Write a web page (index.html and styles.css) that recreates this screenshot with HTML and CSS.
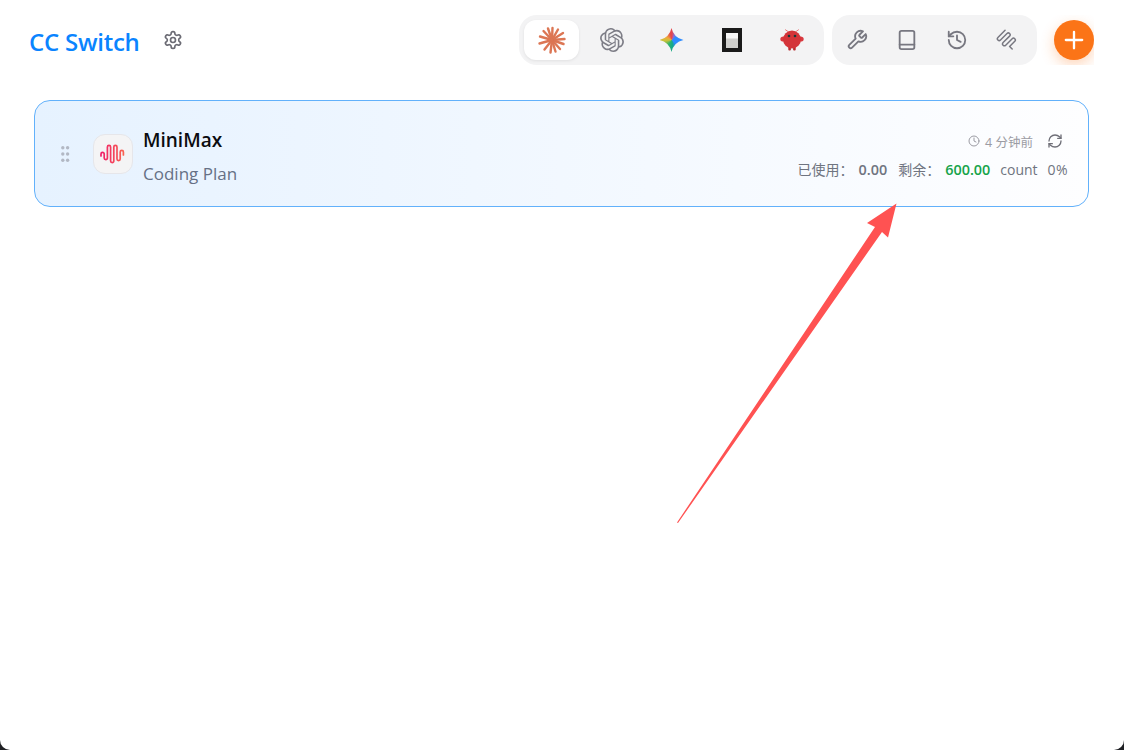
FILE: index.html
```html
<!DOCTYPE html>
<html lang="zh">
<head>
<meta charset="utf-8">
<title>CC Switch</title>
<link rel="stylesheet" href="styles.css">
</head>
<body>
<div class="window">
  <header class="header">
    <div class="brand">
      <h1 class="title">CC Switch</h1>
      <button class="gear">
        <svg class="icon-20" viewBox="0 0 24 24"><path d="M12.22 2h-.44a2 2 0 0 0-2 2v.18a2 2 0 0 1-1 1.73l-.43.25a2 2 0 0 1-2 0l-.15-.08a2 2 0 0 0-2.73.73l-.22.38a2 2 0 0 0 .73 2.73l.15.1a2 2 0 0 1 1 1.72v.51a2 2 0 0 1-1 1.74l-.15.09a2 2 0 0 0-.73 2.73l.22.38a2 2 0 0 0 2.73.73l.15-.08a2 2 0 0 1 2 0l.43.25a2 2 0 0 1 1 1.73V20a2 2 0 0 0 2 2h.44a2 2 0 0 0 2-2v-.18a2 2 0 0 1 1-1.73l.43-.25a2 2 0 0 1 2 0l.15.08a2 2 0 0 0 2.73-.73l.22-.39a2 2 0 0 0-.73-2.73l-.15-.08a2 2 0 0 1-1-1.74v-.5a2 2 0 0 1 1-1.74l.15-.09a2 2 0 0 0 .73-2.73l-.22-.38a2 2 0 0 0-2.73-.73l-.15.08a2 2 0 0 1-2 0l-.43-.25a2 2 0 0 1-1-1.73V4a2 2 0 0 0-2-2z"/><circle cx="12" cy="12" r="3"/></svg>
      </button>
    </div>
    <div class="toolbar">
      <nav class="group apps">
        <button class="app active">
          <svg class="logo-28" viewBox="0 0 28 28"><g class="rays"><path d="M14 14 14.500 2"/><path d="M14 14 20 3.500"/><path d="M14 14 25 7"/><path d="M14 14 26.500 13"/><path d="M14 14 25.500 18"/><path d="M14 14 22 23"/><path d="M14 14 17.500 25.500"/><path d="M14 14 12.500 26.500"/><path d="M14 14 6.500 23.500"/><path d="M14 14 1.500 17.500"/><path d="M14 14 2 10.500"/><path d="M14 14 5.500 5"/><path d="M14 14 10 2.500"/></g></svg>
        </button>
        <button class="app">
          <svg class="logo-24" viewBox="0 0 24 24"><path class="openai" d="M22.2819 9.8211a5.9847 5.9847 0 0 0-.5157-4.9108 6.0462 6.0462 0 0 0-6.5098-2.9A6.0651 6.0651 0 0 0 4.9807 4.1818a5.9847 5.9847 0 0 0-3.9977 2.9 6.0462 6.0462 0 0 0 .7427 7.0966 5.98 5.98 0 0 0 .511 4.9107 6.051 6.051 0 0 0 6.5146 2.9001A5.9847 5.9847 0 0 0 13.2599 24a6.0557 6.0557 0 0 0 5.7718-4.2058 5.9894 5.9894 0 0 0 3.9977-2.9001 6.0557 6.0557 0 0 0-.7475-7.0729zm-9.022 12.6081a4.4755 4.4755 0 0 1-2.8764-1.0408l.1419-.0804 4.7783-2.7582a.7948.7948 0 0 0 .3927-.6813v-6.7369l2.02 1.1686a.071.071 0 0 1 .038.052v5.5826a4.504 4.504 0 0 1-4.4945 4.4944zm-9.6607-4.1254a4.4708 4.4708 0 0 1-.5346-3.0137l.142.0852 4.783 2.7582a.7712.7712 0 0 0 .7806 0l5.8428-3.3685v2.3324a.0804.0804 0 0 1-.0332.0615L9.74 19.9502a4.4992 4.4992 0 0 1-6.1408-1.6464zM2.3408 7.8956a4.485 4.485 0 0 1 2.3655-1.9728V11.6a.7664.7664 0 0 0 .3879.6765l5.8144 3.3543-2.0201 1.1685a.0757.0757 0 0 1-.071 0l-4.8303-2.7865A4.504 4.504 0 0 1 2.3408 7.872zm16.5963 3.8558L13.1038 8.364 15.1192 7.2a.0757.0757 0 0 1 .071 0l4.8303 2.7913a4.4944 4.4944 0 0 1-.6765 8.1042v-5.6772a.79.79 0 0 0-.407-.667zm2.0107-3.0231l-.142-.0852-4.7735-2.7818a.7759.7759 0 0 0-.7854 0L9.409 9.2297V6.8974a.0662.0662 0 0 1 .0284-.0615l4.8303-2.7866a4.4992 4.4992 0 0 1 6.6802 4.66zM8.3065 12.863l-2.02-1.1638a.0804.0804 0 0 1-.038-.0567V6.0742a4.4992 4.4992 0 0 1 7.3757-3.4537l-.142.0805L8.704 5.459a.7948.7948 0 0 0-.3927.6813zm1.0976-2.3654l2.602-1.4998 2.6069 1.4998v2.9994l-2.5974 1.4997-2.6067-1.4997Z"/></svg>
        </button>
        <button class="app"><span class="gemini"></span></button>
        <button class="app">
          <svg class="logo-24" viewBox="0 0 24 24"><rect x="2" y="0" width="20" height="24.500" fill="#1a1a1a"/><rect x="6" y="5" width="12" height="15" fill="#cfcfcd"/><rect x="6" y="5" width="12" height="5.500" fill="#f7f7f7"/></svg>
        </button>
        <button class="app">
          <svg class="logo-24" viewBox="0 0 24 24"><path d="M8 3.500 5.500 1.800M16 3.500 18.500 1.800" stroke="#e9777c" stroke-width="1" fill="none"/><ellipse cx="3.500" cy="11" rx="3.200" ry="2.600" fill="#d9393f"/><ellipse cx="20.500" cy="11" rx="3.200" ry="2.600" fill="#d9393f"/><rect x="8.300" y="18" width="2.600" height="4.500" rx="1" fill="#b92c30"/><rect x="13.100" y="18" width="2.600" height="4.500" rx="1" fill="#b92c30"/><ellipse cx="12" cy="11.500" rx="9" ry="9" fill="#d43439"/><circle cx="9" cy="8" r="1.300" fill="#173a3a"/><circle cx="15" cy="8" r="1.300" fill="#173a3a"/></svg>
        </button>
      </nav>
      <nav class="group tools">
        <button class="tool"><svg class="icon-22" viewBox="0 0 24 24"><path d="M14.7 6.3a1 1 0 0 0 0 1.4l1.6 1.6a1 1 0 0 0 1.4 0l3.77-3.77a6 6 0 0 1-7.94 7.94l-6.91 6.91a2.120 2.120 0 0 1-3-3l6.910-6.910a6 6 0 0 1 7.940-7.940l-3.760 3.760z"/></svg></button>
        <button class="tool"><svg class="icon-22" viewBox="0 0 24 24"><rect x="4" y="2" width="16" height="20" rx="2"/><path d="M4 17H20"/></svg></button>
        <button class="tool"><svg class="icon-22" viewBox="0 0 24 24"><path d="M3 12a9 9 0 1 0 9-9 9.750 9.750 0 0 0-6.740 2.740L3 8"/><path d="M3 3v5h5"/><path d="M12 7v5l4 2"/></svg></button>
        <button class="tool"><svg class="icon-22 icon-thin" viewBox="0 0 24 24"><g transform="rotate(-45 12 12)"><path d="M18 3H7a2 2 0 0 0 0 4H17a2 2 0 0 1 0 4H7a2 2 0 0 0 0 4H17a2 2 0 0 1 0 4H9V23"/></g></svg></button>
      </nav>
      <div class="add-wrap">
        <button class="add"><svg class="icon-add" viewBox="0 0 24 24"><path d="M5 12H19M12 5V19"/></svg></button>
      </div>
    </div>
  </header>

  <main class="main">
    <article class="card">
      <svg class="grip" viewBox="0 0 10 16"><circle cx="1.800" cy="1.800" r="1.700"/><circle cx="6.600" cy="1.800" r="1.700"/><circle cx="1.800" cy="8" r="1.700"/><circle cx="6.600" cy="8" r="1.700"/><circle cx="1.800" cy="14.200" r="1.700"/><circle cx="6.600" cy="14.200" r="1.700"/></svg>
      <div class="tile">
        <svg class="wave" viewBox="0 0 26 20">
          <defs><linearGradient id="waveGrad" gradientUnits="userSpaceOnUse" x1="0" x2="26" y1="0" y2="0"><stop offset="0" stop-color="#ee1b6a"/><stop offset="1" stop-color="#fa6a50"/></linearGradient></defs>
          <path d="M1 12V10a1.600 1.600 0 0 1 3.200 0V14a1.600 1.600 0 0 0 3.200 0V3a1.600 1.600 0 0 1 3.200 0V17a1.600 1.600 0 0 0 3.200 0V3a1.600 1.600 0 0 1 3.200 0V15a1.600 1.600 0 0 0 3.200 0V8a1.600 1.600 0 0 1 3.200 0V11"/>
        </svg>
      </div>
      <div class="info">
        <div class="name">MiniMax</div>
        <div class="plan">Coding Plan</div>
      </div>
      <div class="usage">
        <div class="usage-top">
          <span class="updated"><svg class="icon-12" viewBox="0 0 24 24"><circle cx="12" cy="12" r="10"/><path d="M12 6v6l4 2"/></svg>4 分钟前</span>
          <svg class="icon-16" viewBox="0 0 24 24"><path d="M3 12a9 9 0 0 1 9-9 9.750 9.750 0 0 1 6.740 2.740L21 8"/><path d="M21 3v5h-5"/><path d="M21 12a9 9 0 0 1-9 9 9.750 9.750 0 0 1-6.740-2.740L3 16"/><path d="M8 16H3v5"/></svg>
        </div>
        <div class="usage-stats">
          <span>已使用：</span><b class="used">0.00</b>
          <span class="remain">剩余：</span><b class="left">600.00</b>
          <span class="unit">count</span><span class="pct">0%</span>
        </div>
      </div>
    </article>
  </main>

  <svg class="arrow" viewBox="0 0 1124 750"><polygon points="677,522.500 875,227 867,223 896.500,203.500 888,237.500 882,232 678,523"/></svg>
</div>
</body>
</html>
```

FILE: styles.css
```css
* { box-sizing: border-box; }
html, body { margin: 0; height: 750px; overflow: hidden; background: #1f2024; }
body { font-family: "Open Sans", "Noto Sans CJK SC", sans-serif; }
button { border: 0; padding: 0; background: none; display: flex; align-items: center; justify-content: center; }

.window { position: relative; height: 750px; background: #fff; border-radius: 0 0 10px 10px; }

.header { display: flex; justify-content: space-between; padding: 15px 30px 0 29px; height: 65px; }
.brand { display: flex; align-items: center; height: 50px; }
.title { margin: 4px 0 0; font-size: 24px; line-height: 32px; font-weight: 600; color: #0a84ff; letter-spacing: -.24px; }
.gear { width: 20px; height: 20px; margin-left: 23px; }

svg { fill: none; stroke: #71717a; stroke-width: 2; stroke-linecap: round; stroke-linejoin: round; display: block; }
.icon-20 { width: 20px; height: 20px; stroke: #6b6b74; }
.icon-22 { width: 22px; height: 22px; stroke: #777780; }
.icon-thin { stroke-width: 1.600; }
.icon-12 { width: 12px; height: 12px; stroke: #9b9ba3; margin-right: 5px; }
.icon-16 { width: 16px; height: 16px; stroke: #6f6f78; margin-left: 14px; }
.icon-add { width: 28px; height: 28px; stroke: #fff; }

.toolbar { display: flex; align-items: flex-start; }
.group { display: flex; height: 50px; padding: 5px; background: #f3f3f4; border-radius: 18px; }
.apps { gap: 5px; margin-right: 8px; }
.tools { gap: 10px; padding-right: 10px; }
.app { width: 55px; height: 40px; border-radius: 12px; }
.app.active { background: #fff; box-shadow: 0 1px 3px rgba(0,0,0,.08); }
.tool { width: 40px; height: 40px; }

.logo-28 { width: 28px; height: 28px; }
.logo-24 { width: 24px; height: 24px; stroke: none; }
.rays path { stroke: #dc7654; stroke-width: 2.400; stroke-linecap: round; }
.openai { fill: #7d7d86; stroke: none; }
.gemini { width: 24px; height: 24px; background: conic-gradient(from 0deg at 50% 50%, #e5484d 0deg, #8a6fd8 25deg, #2f8cff 55deg, #2f8cff 135deg, #14a88a 175deg, #35b56a 220deg, #c9c23a 265deg, #f0a93b 295deg, #e5484d 345deg); clip-path: path("M12 0Q14.200 9.800 24 12Q14.200 14.200 12 24Q9.800 14.200 0 12Q9.800 9.800 12 0Z"); }

.add-wrap { width: 57px; height: 50px; padding: 5px 0 5px 17px; overflow: hidden; }
.add { width: 40px; height: 40px; border-radius: 50%; background: #fb7417; box-shadow: 0 5px 14px rgba(251,116,23,.3); }

.main { padding: 35px 35px 0 34px; }
.card { display: flex; align-items: center; height: 107px; padding: 0 20px 0 26px; border: 1px solid #62b1fb; border-radius: 16px; background: linear-gradient(90deg, #e6f2ff 0%, #fefeff 100%); }
.grip { width: 10px; height: 16px; margin-right: 22px; stroke: none; fill: #b2b8c4; }
.tile { width: 40px; height: 40px; display: flex; align-items: center; justify-content: center; background: #f4f4f5; border: 1px solid #e6e6ea; border-radius: 12px; margin-right: 10px; }
.wave { width: 26px; height: 20px; stroke: url(#waveGrad); stroke-width: 1.700; }

.info { flex: 1; align-self: flex-start; padding-top: 26px; }
.name { font-size: 19px; line-height: 26px; font-weight: 600; color: #0b0b0f; }
.plan { margin-top: 9px; font-size: 17px; line-height: 24px; color: #667085; }

.usage { align-self: flex-start; padding-top: 31px; display: flex; flex-direction: column; align-items: flex-end; }
.usage-top { display: flex; align-items: center; height: 18px; padding-right: 5px; font-size: 12.500px; color: #9b9ba3; }
.updated { display: flex; align-items: center; }
.usage-stats { display: flex; align-items: center; margin-top: 9px; height: 20px; font-size: 14px; color: #6f7480; }
.usage-stats b { font-weight: 600; margin-left: 5px; font-size: 14.400px; }
.used { color: #6f7480; }
.remain { margin-left: 11px; }
.left { color: #16a34a; }
.unit { margin-left: 10px; }
.pct { margin-left: 10px; letter-spacing: .4px; }

.arrow { position: absolute; left: 0; top: 0; width: 1124px; height: 750px; stroke: none; pointer-events: none; }
.arrow polygon { fill: #ff5252; }
```
